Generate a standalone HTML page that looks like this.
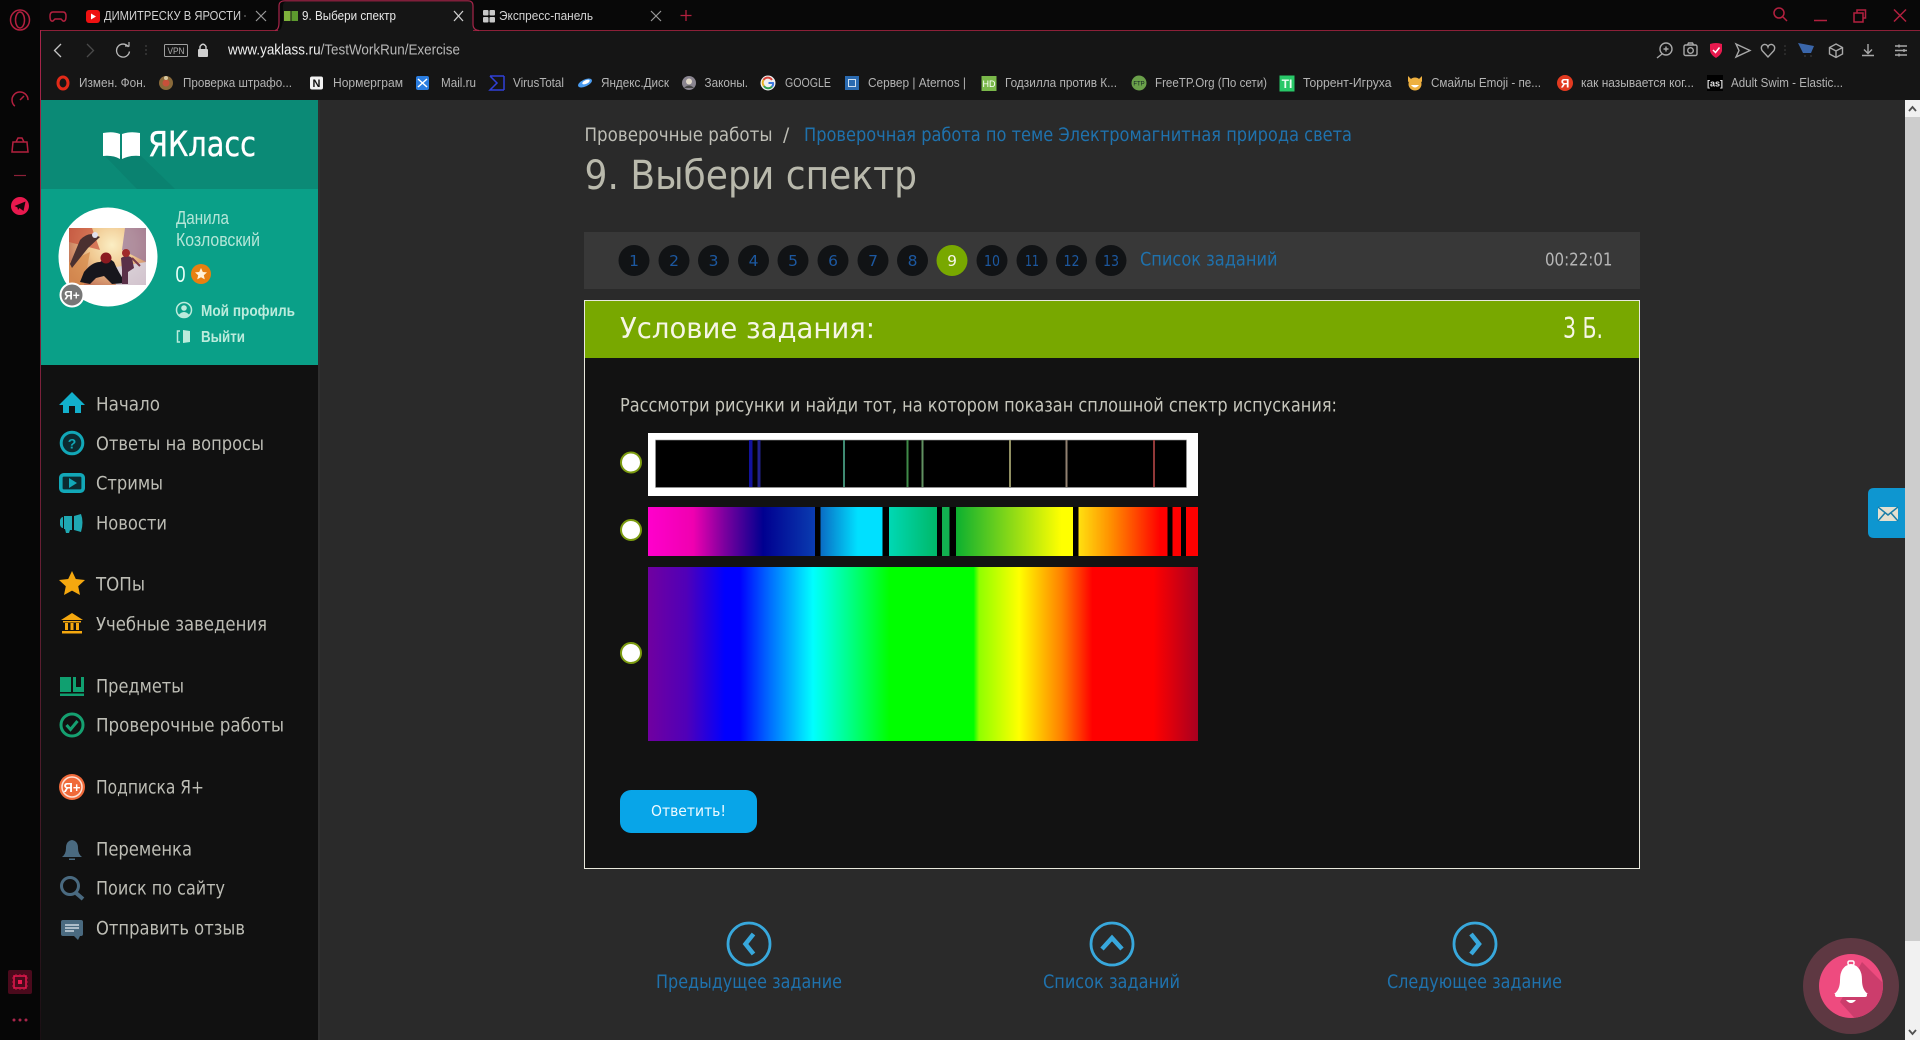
<!DOCTYPE html>
<html lang="ru">
<head>
<meta charset="utf-8">
<title>9. Выбери спектр</title>
<style>
html,body{margin:0;padding:0;width:1920px;height:1040px;overflow:hidden;background:#2a2a2a}
svg{display:block;position:absolute;left:0;top:0}
text{white-space:pre}
.c{font-family:"Liberation Sans","Noto Sans CJK SC",sans-serif}
.d{font-family:"DejaVu Sans","Noto Sans CJK SC",sans-serif}
.bm{font-family:"Liberation Sans",sans-serif;font-size:13px;fill:#b4b4b4}
.tab{font-family:"Liberation Sans",sans-serif;font-size:13px;fill:#d2d2d2}
.mn{font-family:"DejaVu Sans",sans-serif;font-size:18.5px;fill:#bdbdb5}
.lk{font-family:"DejaVu Sans",sans-serif;font-size:18.5px;fill:#1f72ad}
.n{font-family:"DejaVu Sans",sans-serif;font-size:15.5px;fill:#1c58a0;text-anchor:middle}
.ic{fill:none;stroke:#a8a8a8;stroke-width:1.4}
.red{fill:none;stroke:#b3203f;stroke-width:1.5}
</style>
</head>
<body>
<svg width="1920" height="1040" viewBox="0 0 1920 1040" xmlns="http://www.w3.org/2000/svg">
<defs>
<linearGradient id="s2a" gradientUnits="userSpaceOnUse" x1="648" x2="815" y1="0" y2="0">
<stop offset="0" stop-color="#ff00cc"/><stop offset=".27" stop-color="#f000b0"/><stop offset=".46" stop-color="#7a009e"/><stop offset=".69" stop-color="#000090"/><stop offset="1" stop-color="#0a3cb0"/></linearGradient>
<linearGradient id="s2b" x1="0" x2="1" y1="0" y2="0"><stop offset="0" stop-color="#0a6cc4"/><stop offset=".6" stop-color="#00e0ff"/><stop offset="1" stop-color="#00e0ff"/></linearGradient>
<linearGradient id="s2c" x1="0" x2="1" y1="0" y2="0"><stop offset="0" stop-color="#00d8b4"/><stop offset="1" stop-color="#00b868"/></linearGradient>
<linearGradient id="s2d" x1="0" x2="1" y1="0" y2="0"><stop offset="0" stop-color="#0cb030"/><stop offset=".9" stop-color="#ffff00"/><stop offset="1" stop-color="#ffff00"/></linearGradient>
<linearGradient id="s2e" x1="0" x2="1" y1="0" y2="0"><stop offset="0" stop-color="#ffe010"/><stop offset=".36" stop-color="#ff9000"/><stop offset=".92" stop-color="#ff0000"/><stop offset="1" stop-color="#ff0000"/></linearGradient>
<linearGradient id="s3" x1="0" x2="1" y1="0" y2="0">
<stop offset="0" stop-color="#7000a0"/><stop offset=".07" stop-color="#5000b8"/><stop offset=".14" stop-color="#0000ff"/><stop offset=".167" stop-color="#0000ff"/><stop offset=".223" stop-color="#0070ff"/><stop offset=".3" stop-color="#00ffff"/><stop offset=".362" stop-color="#00ff90"/><stop offset=".439" stop-color="#00ff00"/><stop offset=".592" stop-color="#00ff00"/><stop offset=".602" stop-color="#90ff00"/><stop offset=".675" stop-color="#ffff00"/><stop offset=".752" stop-color="#ff8000"/><stop offset=".808" stop-color="#ff0000"/><stop offset=".919" stop-color="#ff0000"/><stop offset="1" stop-color="#a80020"/></linearGradient>
<radialGradient id="avbg" gradientUnits="userSpaceOnUse" cx="112" cy="245" r="52"><stop offset="0" stop-color="#fbeec4"/><stop offset=".45" stop-color="#f0c890"/><stop offset="1" stop-color="#b8604a"/></radialGradient>
<linearGradient id="fade" x1="0" x2="0" y1="0" y2="1"><stop offset="0" stop-color="#a8254a"/><stop offset=".75" stop-color="#4a1c2a"/><stop offset="1" stop-color="#1a1014"/></linearGradient>
<linearGradient id="hdsh" x1="0" x2="1" y1="0" y2="1"><stop offset="0" stop-color="#087a68"/><stop offset="1" stop-color="#0b8a76"/></linearGradient>
<clipPath id="hdclip"><rect x="41" y="100" width="277" height="89"/></clipPath>
<clipPath id="bellc"><circle cx="1851" cy="986" r="32"/></clipPath>
<clipPath id="avc"><rect x="69" y="228" width="77" height="57"/></clipPath>
</defs>

<!-- window -->
<rect width="1920" height="1040" fill="#2a2a2a"/>
<rect width="1920" height="31" fill="#080808"/>
<rect x="0" y="0" width="40" height="1040" fill="#060606"/>
<rect x="40" y="31" width="1880" height="69" fill="#151515"/>
<rect x="40" y="30" width="1880" height="1" fill="#8c2038"/>
<rect x="40" y="30" width="1" height="1010" fill="url(#fade)"/>

<!-- active tab -->
<path d="M278 31 Q282 30 283 20 L283 6 Q283 1 289 1 L468 1 Q473 1 473 6 L473 25 Q473 30 478 30 L278 30Z" fill="#151515"/>
<path d="M275 30.5 Q279 30 279 22 L279 6 Q279 .8 285 .8 L468 .8 Q473 .8 473 6 L473 24 Q473 30 479 30.5" fill="none" stroke="#a8254a" stroke-width="1.2"/>
<rect x="278" y="30" width="195" height="2" fill="#151515"/>

<!-- opera logo -->
<ellipse cx="20" cy="20" rx="9.5" ry="10" class="red"/><ellipse cx="20" cy="20" rx="4.5" ry="8" class="red"/>
<!-- gamepad -->
<path d="M53 12 h10 q3 0 3 4 q0 6 -3 5 l-2 -2 h-6 l-2 2 q-3 1 -3 -5 q0 -4 3 -4z" class="red"/>
<!-- yt -->
<rect x="86" y="10" width="14" height="13" rx="3" fill="#ee1111"/><path d="M91 13.5 L96 16.5 L91 19.5Z" fill="#fff"/>
<text class="tab" x="104" y="20" textLength="137" lengthAdjust="spacingAndGlyphs">ДИМИТРЕСКУ В ЯРОСТИ</text>
<circle cx="245" cy="16" r="1" fill="#555"/>
<path d="M256 11 L266 21 M266 11 L256 21" stroke="#9a9a9a" stroke-width="1.2"/>
<!-- active tab content -->
<rect x="284" y="11" width="6.5" height="10" fill="#7fb23c"/><rect x="291.5" y="11" width="6.5" height="10" fill="#5d9a2e"/>
<text class="tab" x="302" y="20" style="fill:#e8e8e8" textLength="94" lengthAdjust="spacingAndGlyphs">9. Выбери спектр</text>
<path d="M454 11 L463 21 M463 11 L454 21" stroke="#cfcfcf" stroke-width="1.3"/>
<!-- tab 3 -->
<rect x="483" y="10" width="5.5" height="5.5" rx="1" fill="#c8c8c8"/><rect x="489.5" y="10" width="5.5" height="5.5" rx="1" fill="#c8c8c8"/><rect x="483" y="17" width="5.5" height="5.5" rx="1" fill="#c8c8c8"/><rect x="489.5" y="17" width="5.5" height="5.5" rx="1" fill="#c8c8c8"/>
<text class="tab" x="499" y="20" textLength="94" lengthAdjust="spacingAndGlyphs">Экспресс-панель</text>
<path d="M651 11 L661 21 M661 11 L651 21" stroke="#9a9a9a" stroke-width="1.2"/>
<path d="M686 10 V21 M680.5 15.5 H691.5" stroke="#b3203f" stroke-width="1.3"/>

<!-- window controls -->
<circle cx="1779" cy="13" r="5" class="red"/><path d="M1783 17 L1787 21" class="red"/>
<path d="M1814 20.5 H1827" stroke="#b3203f" stroke-width="1.5"/>
<rect x="1854" y="13" width="9" height="9" class="red"/><path d="M1857 13 V10 H1865.500 V18 H1863" class="red"/>
<path d="M1894 9.5 L1906 21.5 M1906 9.5 L1894 21.5" class="red"/>

<!-- toolbar -->
<path d="M61 44 L54.5 50.500 L61 57" fill="none" stroke="#c4c4c4" stroke-width="1.3"/>
<path d="M87 44 L93.500 50.500 L87 57" fill="none" stroke="#4a4a4a" stroke-width="1.3"/>
<path d="M128.500 47 A6.500 6.500 0 1 0 129.500 51.500" fill="none" stroke="#b9b9b9" stroke-width="1.3"/><path d="M125 46 L129 46 L129 42" fill="none" stroke="#b9b9b9" stroke-width="1.2"/>
<circle cx="146" cy="46" r=".9" fill="#444"/><circle cx="146" cy="50" r=".9" fill="#444"/><circle cx="146" cy="54" r=".9" fill="#444"/>
<rect x="164.500" y="44.500" width="23" height="12" rx="1" fill="none" stroke="#a0a0a0"/>
<text class="c" x="167.500" y="54" font-size="9" fill="#b0b0b0" textLength="17" lengthAdjust="spacingAndGlyphs">VPN</text>
<rect x="198" y="49" width="10" height="8" rx="1" fill="#cfcfcf"/><path d="M200 49 V46.500 Q203 42 206 46.500 V49" fill="none" stroke="#cfcfcf" stroke-width="1.4"/>
<text class="c" x="228" y="54.500" font-size="14.500" textLength="232" lengthAdjust="spacingAndGlyphs" fill="#b8b8b8"><tspan fill="#f0f0f0">www.yaklass.ru</tspan>/TestWorkRun/Exercise</text>

<!-- right toolbar icons -->
<circle cx="1666" cy="49" r="6" class="ic"/><path d="M1662 54 L1657 58 M1663.500 49 H1668.500 M1666 46.500 V51.500" class="ic"/>
<rect x="1684" y="45" width="13" height="10.500" rx="1.500" class="ic"/><circle cx="1690.500" cy="50.500" r="2.800" class="ic"/><path d="M1687.500 45 L1688.500 43 H1692.500 L1693.500 45" class="ic"/>
<path d="M1710 44 Q1716 42 1722 44 V51 Q1721 55 1716 58 Q1711 55 1710 51Z" fill="#e8194e"/><path d="M1713 50 L1715.500 52.500 L1719.500 47.500" fill="none" stroke="#fff" stroke-width="1.5"/>
<path d="M1736 44 L1750 50.500 L1736 57 L1739 50.500Z" class="ic"/>
<path d="M1768 57 L1762 50.500 Q1760 46 1764 44.500 Q1767 44 1768 47 Q1769 44 1772 44.500 Q1776 46 1774 50.500Z" class="ic"/>
<circle cx="1785" cy="46" r=".8" fill="#444"/><circle cx="1785" cy="50" r=".8" fill="#444"/><circle cx="1785" cy="54" r=".8" fill="#444"/>
<path d="M1798 43 L1814 46 L1811 53 H1803Z" fill="#3a66aa"/><circle cx="1805" cy="56" r="1" fill="#333"/><circle cx="1811" cy="56" r="1" fill="#333"/>
<path d="M1836 44 L1842.500 47.500 V54 L1836 57.500 L1829.500 54 V47.500Z M1829.500 47.500 L1836 51 L1842.500 47.500 M1836 51 V57.500" class="ic"/>
<path d="M1868 44 V53 M1864 49.500 L1868 53.500 L1872 49.500 M1862 55.500 H1874" class="ic"/>
<path d="M1895 46 H1907 M1895 50.500 H1907 M1895 55 H1907 M1899 44.500 V47.500 M1904 49 V52 M1899 53.500 V56.500" class="ic" stroke-width="1.2"/>

<!-- bookmarks -->
<ellipse cx="63" cy="83" rx="5" ry="6" fill="none" stroke="#e22a18" stroke-width="3"/>
<text class="bm" x="79" y="87" textLength="67" lengthAdjust="spacingAndGlyphs">Измен. Фон.</text>
<circle cx="166" cy="83" r="7" fill="#8a6a3a"/><circle cx="166" cy="83" r="3.500" fill="#c8503a"/><circle cx="166" cy="78" r="2" fill="#d8c8a0"/>
<text class="bm" x="183" y="87" textLength="109" lengthAdjust="spacingAndGlyphs">Проверка штрафо...</text>
<rect x="310" y="76.500" width="13" height="13" rx="2" fill="#f2f2f2"/><text class="c" x="316.500" y="87" font-size="11" font-weight="bold" text-anchor="middle" fill="#111">N</text>
<text class="bm" x="333" y="87" textLength="70" lengthAdjust="spacingAndGlyphs">Нормерграм</text>
<rect x="416" y="76" width="13" height="14" rx="2" fill="#2a7de0"/><path d="M418 79 L427 87 M427 79 L418 87" stroke="#fff" stroke-width="1.500"/>
<text class="bm" x="441" y="87" textLength="35" lengthAdjust="spacingAndGlyphs">Mail.ru</text>
<path d="M490 76 H504 M504 90 H490 L497 83 L490 76 M504 76 V90" fill="none" stroke="#3040d8" stroke-width="1.500"/>
<text class="bm" x="513" y="87" textLength="51" lengthAdjust="spacingAndGlyphs">VirusTotal</text>
<ellipse cx="585" cy="83" rx="7.500" ry="3.500" transform="rotate(-25 585 83)" fill="#4a9cf0"/><ellipse cx="586" cy="82" rx="4" ry="1.800" transform="rotate(-25 586 82)" fill="#fff"/>
<text class="bm" x="601" y="87" textLength="68" lengthAdjust="spacingAndGlyphs">Яндекс.Диск</text>
<circle cx="689" cy="83" r="7" fill="#8a8590"/><circle cx="689" cy="81.500" r="3" fill="#e0d8c8"/><path d="M684 88 Q689 83 694 88" fill="#444"/>
<text class="bm" x="704.500" y="87" textLength="43.500" lengthAdjust="spacingAndGlyphs">Законы.</text>
<circle cx="768" cy="83" r="7.500" fill="#f0f0f0"/>
<path d="M763.500 80 A5 5 0 0 1 772 80" fill="none" stroke="#d8443a" stroke-width="2"/><path d="M763.500 80 A5 5 0 0 0 764 86" fill="none" stroke="#e8b020" stroke-width="2"/><path d="M764 86 A5 5 0 0 0 772 86.500" fill="none" stroke="#30a050" stroke-width="2"/><path d="M772 86.500 Q773.500 85 773 83 H768.500" fill="none" stroke="#3a78e0" stroke-width="2"/>
<text class="bm" x="785" y="87" textLength="46" lengthAdjust="spacingAndGlyphs">GOOGLE</text>
<rect x="845" y="76" width="14" height="14" fill="#2a6ab0"/><rect x="848.500" y="79.500" width="7" height="7" fill="none" stroke="#cfe0f0"/>
<text class="bm" x="868" y="87" textLength="98" lengthAdjust="spacingAndGlyphs">Сервер | Aternos |</text>
<rect x="981.500" y="76" width="15" height="15" fill="#7ab84a"/><text class="c" x="989" y="87" font-size="9" text-anchor="middle" fill="#fff">HD</text>
<text class="bm" x="1005" y="87" textLength="112" lengthAdjust="spacingAndGlyphs">Годзилла против К...</text>
<circle cx="1139" cy="83" r="7.500" fill="#6aa04a"/><text class="c" x="1139" y="85.500" font-size="6" text-anchor="middle" fill="#122">FTP</text>
<text class="bm" x="1155" y="87" textLength="112" lengthAdjust="spacingAndGlyphs">FreeTP.Org (По сети)</text>
<rect x="1279.500" y="75.500" width="15" height="16" fill="#28c868"/><text class="c" x="1287" y="88" font-size="12" font-weight="bold" text-anchor="middle" fill="#eafff0">TI</text>
<text class="bm" x="1303" y="87" textLength="88.500" lengthAdjust="spacingAndGlyphs">Торрент-Игруха</text>
<circle cx="1415" cy="84" r="6.500" fill="#eeb040"/><path d="M1408 76 L1412 80 L1408 82Z M1422 76 L1418 80 L1422 82Z" fill="#eeb040"/><path d="M1411 85 H1419 Q1415 90 1411 85Z" fill="#fff"/>
<text class="bm" x="1431" y="87" textLength="110" lengthAdjust="spacingAndGlyphs">Смайлы Emoji - пе...</text>
<circle cx="1565" cy="83" r="8" fill="#e23a20"/><text class="c" x="1565" y="87.500" font-size="12" font-weight="bold" text-anchor="middle" fill="#fff">Я</text>
<text class="bm" x="1581" y="87" textLength="113" lengthAdjust="spacingAndGlyphs">как называется ког...</text>
<rect x="1707" y="75" width="16" height="16" fill="#000"/><text class="c" x="1715" y="86.500" font-size="9" font-weight="bold" text-anchor="middle" fill="#e8e8e8">[as]</text>
<text class="bm" x="1731" y="87" textLength="112" lengthAdjust="spacingAndGlyphs">Adult Swim - Elastic...</text>

<!-- left strip icons -->
<circle cx="20" cy="100" r="8" class="red" stroke-dasharray="32 18" transform="rotate(130 20 100)"/><path d="M20 100 L24 96" class="red"/>
<path d="M13 142 H27 L28 152 H12Z M16 142 L18 138 H22 L24 142" class="red"/>
<path d="M14 175.500 H26" stroke="#8c2038" stroke-width="1.200"/>
<circle cx="20" cy="206" r="9" fill="#e8194e"/><path d="M14.500 206 L25.500 201.500 L23.500 211 L19.500 208 L18 210 L17.500 207.500Z" fill="#15060a"/>
<rect x="8" y="970" width="24" height="24" rx="2" fill="#4a0a1c"/>
<rect x="14" y="976" width="12" height="12" fill="none" stroke="#e8194e" stroke-width="1.500"/><rect x="18" y="980" width="4" height="4" fill="#e8194e"/>
<path d="M16 974 V976 M20 974 V976 M24 974 V976 M16 988 V990 M20 988 V990 M24 988 V990 M12 978 H14 M12 982 H14 M12 986 H14 M26 978 H28 M26 982 H28 M26 986 H28" stroke="#c01440" stroke-width="1"/>
<circle cx="14" cy="1020" r="1.500" fill="#a8254a"/><circle cx="20" cy="1020" r="1.500" fill="#a8254a"/><circle cx="26" cy="1020" r="1.500" fill="#a8254a"/>

<!-- sidebar -->
<rect x="41" y="100" width="277" height="940" fill="#111111"/>
<rect x="318" y="100" width="2" height="940" fill="#2f2f2f"/>
<rect x="41" y="100" width="277" height="89" fill="#0b8a76"/>
<rect x="41" y="189" width="277" height="176" fill="#0aa088"/>
<path d="M104 155 L140 155 L175 189 L137 189Z" fill="#0a8270" clip-path="url(#hdclip)"/>
<path d="M103 133 Q113 131 120 134 V159 Q113 155 103 156Z M122 134 Q130 131 140 133 V156 Q130 155 122 159Z" fill="#ffffff"/>
<text class="d" x="148" y="156" font-size="35" fill="#fff" stroke="#fff" stroke-width=".35" textLength="108" lengthAdjust="spacingAndGlyphs">ЯКласс</text>

<circle cx="108" cy="257" r="49.500" fill="#fff"/>
<g clip-path="url(#avc)">
<rect x="69" y="228" width="77" height="57" fill="url(#avbg)"/>
<path d="M125 228 H146 V262 L122 250Z" fill="#9a7aa0" opacity=".75"/>
<path d="M69 228 H92 L100 250 L69 242Z" fill="#c8503a" opacity=".7"/>
<path d="M69 262 L90 252 L84 285 H69Z" fill="#d89050" opacity=".8"/>
<path d="M110 268 L146 262 V285 H116Z" fill="#d6d4e4" opacity=".85"/>
<path d="M80 240 Q88 232 95 235 L100 237 L88 248 L72 268 L70 264Z" fill="#4a3030"/>
<circle cx="95" cy="235" r="3" fill="#e0e0ec"/>
<path d="M84 272 Q92 262 100 262 Q108 256 114 262 Q118 272 126 283 L112 284 L104 276 L96 278 L90 284 L80 282Z" fill="#17161c"/>
<circle cx="106" cy="258" r="5.500" fill="#8a1a20"/>
<path d="M121 258 Q127 254 132 258 L134 268 L128 272 L128 284 L122 284 L122 270Z" fill="#5a3048"/>
<circle cx="126" cy="253" r="4" fill="#a02a2a"/>
<path d="M132 258 L140 266" stroke="#7a3a4a" stroke-width="2"/>
</g>
<circle cx="72" cy="295" r="11.500" fill="#777" stroke="#fff" stroke-width="2"/>
<text class="c" x="72" y="299.500" font-size="12" font-weight="bold" text-anchor="middle" fill="#fff">Я+</text>

<text class="c" x="176" y="224" font-size="18" fill="#b5e6d8" textLength="53" lengthAdjust="spacingAndGlyphs">Данила</text>
<text class="c" x="176" y="246" font-size="18" fill="#b5e6d8" textLength="84" lengthAdjust="spacingAndGlyphs">Козловский</text>
<text class="c" x="175.500" y="282" font-size="23" fill="#eafff8" textLength="10" lengthAdjust="spacingAndGlyphs">0</text>
<circle cx="201" cy="274" r="10" fill="#e88010"/>
<path d="M201 268 L202.800 272 L207 272.400 L203.800 275.200 L204.800 279.400 L201 277.200 L197.200 279.400 L198.200 275.200 L195 272.400 L199.200 272Z" fill="#fff2d8"/>
<circle cx="184" cy="310" r="7.500" fill="none" stroke="#bcebdc" stroke-width="1.500"/><circle cx="184" cy="308" r="2.800" fill="#bcebdc"/><path d="M178.500 315 Q184 309 189.500 315 Q184 319 178.500 315Z" fill="#bcebdc"/>
<text class="c" x="201" y="316" font-size="16" font-weight="bold" fill="#bcebdc" textLength="94" lengthAdjust="spacingAndGlyphs">Мой профиль</text>
<path d="M180 331 H177.500 V342 H180" fill="none" stroke="#bcebdc" stroke-width="1.500"/><path d="M183 330 L190 331 V342 L183 343Z" fill="#bcebdc"/>
<text class="c" x="201" y="342" font-size="16" font-weight="bold" fill="#bcebdc" textLength="44" lengthAdjust="spacingAndGlyphs">Выйти</text>

<!-- sidebar menu icons -->
<path d="M59 405 L72 392 L85 405 H81 V413 H75 V406 H69 V413 H63 V405Z" fill="#12b0cc"/>
<circle cx="72" cy="443" r="10.800" fill="#0c2a30" stroke="#12a8b8" stroke-width="3"/>
<text class="c" x="72" y="448.500" font-size="14" font-weight="bold" text-anchor="middle" fill="#12a8b8">?</text>
<rect x="60.800" y="474.800" width="22.400" height="16.400" rx="3" fill="#0c2a30" stroke="#12a8b8" stroke-width="3.600"/><path d="M69 478 L77 483 L69 488Z" fill="#12a8b8"/>
<path d="M60 520 Q61 517 63 517 V528 Q61 528 60 525Z M64 516 H72 V530 H70 L69 533 L66 533 L65 529 H64Z M74 516 L81 514 Q84 522 81 532 L74 530Z" fill="#1fa8b2"/>
<path d="M72 571 L75.800 579 L85 580 L78.200 586.200 L80 595 L72 590.600 L64 595 L65.800 586.200 L59 580 L68.200 579Z" fill="#f5a80f"/>
<path d="M72 613 L83 620 H61Z" fill="#f5a80f"/><rect x="63" y="621" width="18" height="1.500" fill="#f5a80f"/><rect x="65" y="623" width="3" height="7" fill="#f5a80f"/><rect x="70.500" y="623" width="3" height="7" fill="#f5a80f"/><rect x="76" y="623" width="3" height="7" fill="#f5a80f"/><rect x="62" y="631" width="20" height="2.500" fill="#f5a80f"/>
<path d="M60 677 H71 V692 H60Z M73 677 H76 V687 H81 V677 H84 V692 H73Z" fill="#10a070"/><rect x="60" y="693.500" width="24" height="2.500" fill="#10a070"/>
<circle cx="72" cy="725" r="11" fill="none" stroke="#15a070" stroke-width="3"/><path d="M66.500 725 L70.500 729.500 L77.500 721" fill="none" stroke="#15a070" stroke-width="3"/>
<circle cx="72" cy="787" r="13" fill="#f06a3a"/><circle cx="72" cy="787" r="10" fill="none" stroke="#fde0d4" stroke-width="1.500"/>
<text class="c" x="72" y="792" font-size="13" font-weight="bold" text-anchor="middle" fill="#fff">Я+</text>
<path d="M72 840 Q78 841 78 848 Q78 854 82 857 H62 Q66 854 66 848 Q66 841 72 840Z" fill="#4a6a80"/><rect x="69" y="858.500" width="6" height="1.500" fill="#4a6a80"/>
<circle cx="70" cy="886" r="8.500" fill="none" stroke="#4a6a80" stroke-width="3"/><path d="M76 893 L83 899" stroke="#4a6a80" stroke-width="4"/>
<path d="M63 920 H81 Q83 920 83 922 V934 Q83 936 81 936 H80 L78 940 L74 936 H63 Q61 936 61 934 V922 Q61 920 63 920Z" fill="#4a6a80"/><path d="M65 925 H79 M65 928 H79 M65 931 H74" stroke="#e8eef2" stroke-width="1.200"/>

<!-- sidebar menu text -->
<text class="mn" x="96" y="410.500" textLength="64" lengthAdjust="spacingAndGlyphs">Начало</text>
<text class="mn" x="96" y="450" textLength="168" lengthAdjust="spacingAndGlyphs">Ответы на вопросы</text>
<text class="mn" x="96" y="489.500" textLength="67" lengthAdjust="spacingAndGlyphs">Стримы</text>
<text class="mn" x="96" y="529.500" textLength="71" lengthAdjust="spacingAndGlyphs">Новости</text>
<text class="mn" x="96" y="590.500" textLength="49" lengthAdjust="spacingAndGlyphs">ТОПы</text>
<text class="mn" x="96" y="630.500" textLength="171" lengthAdjust="spacingAndGlyphs">Учебные заведения</text>
<text class="mn" x="96" y="692.500" textLength="88" lengthAdjust="spacingAndGlyphs">Предметы</text>
<text class="mn" x="96" y="731.500" textLength="188" lengthAdjust="spacingAndGlyphs">Проверочные работы</text>
<text class="mn" x="96" y="793.500" textLength="108" lengthAdjust="spacingAndGlyphs">Подписка Я+</text>
<text class="mn" x="96" y="855.500" textLength="96" lengthAdjust="spacingAndGlyphs">Переменка</text>
<text class="mn" x="96" y="894.500" textLength="129" lengthAdjust="spacingAndGlyphs">Поиск по сайту</text>
<text class="mn" x="96" y="934.500" textLength="149" lengthAdjust="spacingAndGlyphs">Отправить отзыв</text>

<!-- breadcrumb/title -->
<text class="mn" x="584.500" y="141" textLength="188" lengthAdjust="spacingAndGlyphs">Проверочные работы</text>
<text class="mn" x="783" y="141">/</text>
<text class="lk" x="804" y="141" textLength="548" lengthAdjust="spacingAndGlyphs">Проверочная работа по теме Электромагнитная природа света</text>
<text class="d" x="584.500" y="189" font-size="40" fill="#b9b9ac" textLength="332.500" lengthAdjust="spacingAndGlyphs">9. Выбери спектр</text>

<!-- task nav -->
<rect x="584" y="232" width="1056" height="57" fill="#383838"/>
<g fill="#111315">
<ellipse cx="634" cy="260.500" rx="15.500" ry="15.500"/><ellipse cx="674" cy="260.500" rx="15.500" ry="15.500"/><ellipse cx="713.500" cy="260.500" rx="15.500" ry="15.500"/><ellipse cx="753.500" cy="260.500" rx="15.500" ry="15.500"/><ellipse cx="793" cy="260.500" rx="15.500" ry="15.500"/><ellipse cx="833" cy="260.500" rx="15.500" ry="15.500"/><ellipse cx="873" cy="260.500" rx="15.500" ry="15.500"/><ellipse cx="912.500" cy="260.500" rx="15.500" ry="15.500"/><ellipse cx="992" cy="260.500" rx="15.500" ry="15.500"/><ellipse cx="1032" cy="260.500" rx="15.500" ry="15.500"/><ellipse cx="1071.500" cy="260.500" rx="15.500" ry="15.500"/><ellipse cx="1111" cy="260.500" rx="15.500" ry="15.500"/>
</g>
<ellipse cx="952" cy="260.500" rx="15.500" ry="15.500" fill="#78a800"/>
<text class="n" x="634" y="266">1</text><text class="n" x="674" y="266">2</text><text class="n" x="713.500" y="266">3</text><text class="n" x="753.500" y="266">4</text><text class="n" x="793" y="266">5</text><text class="n" x="833" y="266">6</text><text class="n" x="873" y="266">7</text><text class="n" x="912.500" y="266">8</text>
<text class="n" x="952" y="266" style="fill:#f4f4e4">9</text>
<text class="n" x="992" y="266" textLength="16" lengthAdjust="spacingAndGlyphs">10</text><text class="n" x="1032" y="266" textLength="14" lengthAdjust="spacingAndGlyphs">11</text><text class="n" x="1071.500" y="266" textLength="16" lengthAdjust="spacingAndGlyphs">12</text><text class="n" x="1111" y="266" textLength="16" lengthAdjust="spacingAndGlyphs">13</text>
<text class="lk" x="1140" y="265.500" textLength="137.500" lengthAdjust="spacingAndGlyphs">Список заданий</text>
<text class="d" x="1545" y="265.500" font-size="18" fill="#b5b5b5" textLength="67.500" lengthAdjust="spacingAndGlyphs">00:22:01</text>

<!-- panel -->
<rect x="584.500" y="300.500" width="1055" height="568" fill="#121212" stroke="#e8e8dc"/>
<rect x="585" y="301" width="1054" height="57" fill="#78a800"/>
<text class="d" x="620" y="338" font-size="28.500" fill="#f6f6e6" textLength="255" lengthAdjust="spacingAndGlyphs">Условие задания:</text>
<text class="d" x="1563" y="338" font-size="28.500" fill="#f6f6e6" textLength="40" lengthAdjust="spacingAndGlyphs">3 Б.</text>
<text class="mn" x="620" y="411.500" textLength="717" lengthAdjust="spacingAndGlyphs" style="fill:#c6c6bc">Рассмотри рисунки и найди тот, на котором показан сплошной спектр испускания:</text>

<!-- radios -->
<ellipse cx="631" cy="462.500" rx="10" ry="10" fill="#fff" stroke="#7c9c10" stroke-width="2"/>
<ellipse cx="631" cy="530" rx="10" ry="10" fill="#fff" stroke="#7c9c10" stroke-width="2"/>
<ellipse cx="631" cy="653" rx="10" ry="10" fill="#fff" stroke="#7c9c10" stroke-width="2"/>

<!-- spectrum 1 -->
<rect x="648" y="433" width="550" height="63" fill="#fff"/>
<rect x="655.500" y="440" width="531" height="47.500" fill="#000" stroke="#999" stroke-width=".6"/>
<g>
<rect x="749" y="440" width="3.500" height="47" fill="#12129c"/><rect x="757.500" y="440" width="3" height="47" fill="#22228a"/>
<rect x="843" y="440" width="2" height="47" fill="#3f8a72"/><rect x="906.500" y="440" width="2" height="47" fill="#3f8a48"/><rect x="921.500" y="440" width="2" height="47" fill="#609060"/>
<rect x="1009" y="440" width="2" height="47" fill="#908f62"/><rect x="1065.500" y="440" width="2" height="47" fill="#908070"/><rect x="1153" y="440" width="2" height="47" fill="#903838"/>
</g>

<!-- spectrum 2 -->
<rect x="648" y="507" width="550" height="49" fill="#000"/>
<rect x="648" y="507" width="167" height="49" fill="url(#s2a)"/>
<rect x="820.500" y="507" width="62" height="49" fill="url(#s2b)"/>
<rect x="889" y="507" width="48" height="49" fill="url(#s2c)"/>
<rect x="942" y="507" width="7.500" height="49" fill="#12b050"/>
<rect x="956" y="507" width="117" height="49" fill="url(#s2d)"/>
<rect x="1078.500" y="507" width="89" height="49" fill="url(#s2e)"/>
<rect x="1172.500" y="507" width="8.500" height="49" fill="#f00"/>
<rect x="1186" y="507" width="12" height="49" fill="#f00"/>

<!-- spectrum 3 -->
<rect x="648" y="567" width="550" height="174" fill="url(#s3)"/>

<!-- button -->
<rect x="620" y="790" width="137" height="43" rx="11" fill="#08a5e8"/>
<text class="d" x="651" y="816" font-size="15.500" fill="#eefaff" textLength="75" lengthAdjust="spacingAndGlyphs">Ответить!</text>

<!-- bottom nav -->
<circle cx="749" cy="944" r="21" fill="none" stroke="#38a8dc" stroke-width="2.800"/>
<path d="M753.500 934 L745.500 944 L753.500 954" fill="none" stroke="#38a8dc" stroke-width="4.500"/>
<circle cx="1112" cy="944" r="21" fill="none" stroke="#38a8dc" stroke-width="2.800"/>
<path d="M1102 949 L1112 938 L1122 949" fill="none" stroke="#38a8dc" stroke-width="4.500"/>
<circle cx="1475" cy="944" r="21" fill="none" stroke="#38a8dc" stroke-width="2.800"/>
<path d="M1471 934 L1479 944 L1471 954" fill="none" stroke="#38a8dc" stroke-width="4.500"/>
<text class="lk" x="656" y="988" textLength="186" lengthAdjust="spacingAndGlyphs">Предыдущее задание</text>
<text class="lk" x="1043" y="988" textLength="137" lengthAdjust="spacingAndGlyphs">Список заданий</text>
<text class="lk" x="1387" y="988" textLength="175" lengthAdjust="spacingAndGlyphs">Следующее задание</text>

<!-- scrollbar -->
<rect x="1905" y="100" width="15" height="940" fill="#f1f1f1"/>
<rect x="1905" y="117" width="15" height="824" fill="#cdcdcd"/>
<path d="M1909 111 L1912.500 107 L1916 111" fill="none" stroke="#505050" stroke-width="1.800"/>
<path d="M1909 1030 L1912.500 1034 L1916 1030" fill="none" stroke="#505050" stroke-width="1.800"/>

<!-- mail tab -->
<path d="M1905 488 H1874 Q1868 488 1868 494 V532 Q1868 538 1874 538 H1905Z" fill="#0e96d0"/>
<rect x="1878" y="507" width="20" height="14" fill="#e4e0d0"/>
<path d="M1878 507 L1888 515 L1898 507 M1878 521 L1885 513 M1898 521 L1891 513" fill="none" stroke="#1a7ea8" stroke-width="1.500"/>

<!-- bell -->
<circle cx="1851" cy="986" r="48" fill="#5e3842"/>
<circle cx="1851" cy="986" r="32" fill="#ee4b7f"/>
<path d="M1840 1002 L1862 962 L1890 990 L1860 1024Z" fill="#cc3d6c" clip-path="url(#bellc)"/>
<path d="M1851 964 Q1862 966 1862 980 Q1862 990 1868 994 H1834 Q1840 990 1840 980 Q1840 966 1851 964Z" fill="#fff"/>
<rect x="1848" y="961" width="6" height="4" rx="1.500" fill="none" stroke="#fff" stroke-width="1.500"/>
<rect x="1835" y="993" width="32" height="4" rx="2" fill="#fff"/>
<path d="M1846 1000 H1856 Q1851 1006 1846 1000Z" fill="#fff"/>
</svg>
</body>
</html>
